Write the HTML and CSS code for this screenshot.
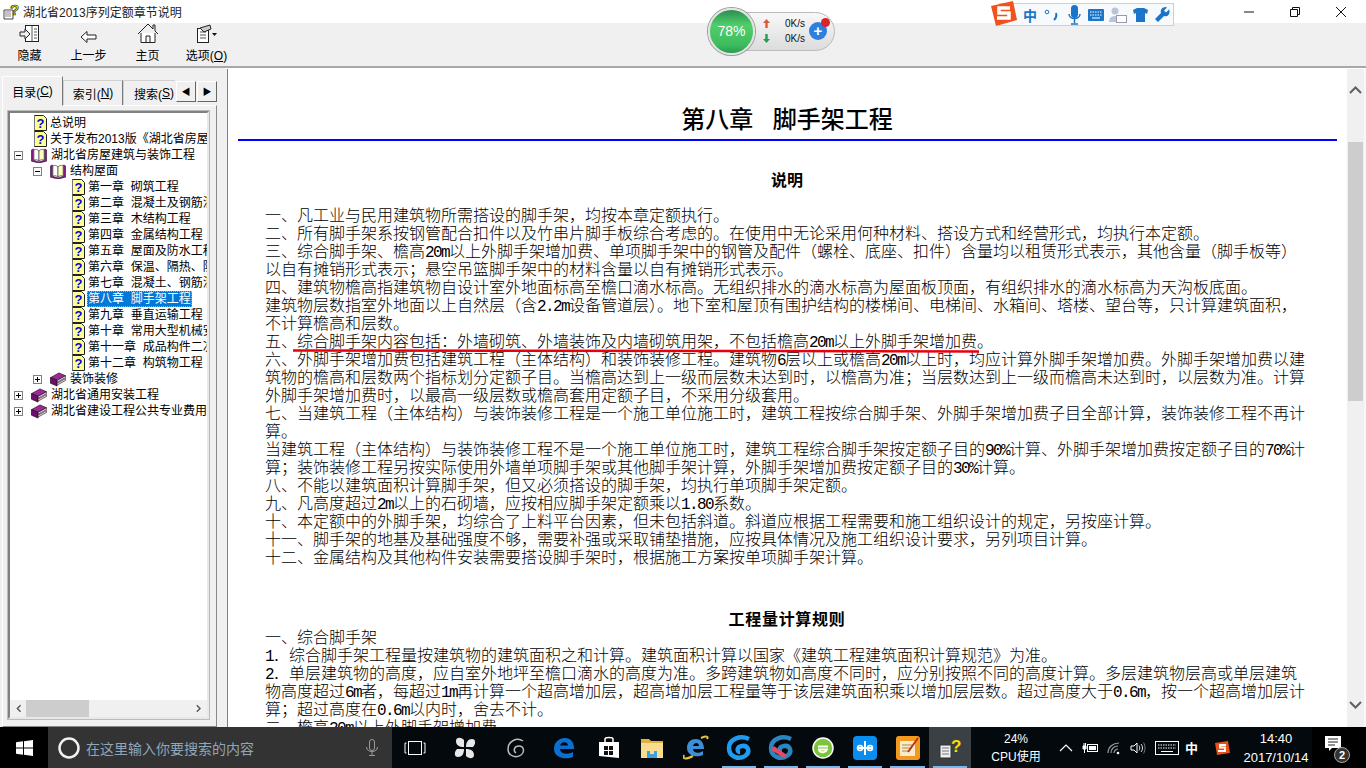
FILE: index.html
```html
<!DOCTYPE html>
<html lang="zh">
<head>
<meta charset="utf-8">
<title>湖北省2013序列定额章节说明</title>
<link rel="stylesheet" href="styles.css">
</head>
<body>
<svg class="defs" width="0" height="0">
  <defs>
    <symbol id="doc" viewBox="0 0 14 16">
      <path d="M1.500 .5h9l3 3v12h-12z" fill="#ffff98" stroke="#222"/>
      <path d="M1.500 1v14" stroke="#777"/>
      <text x="7.400" y="12.500" class="q">?</text>
    </symbol>
    <symbol id="open" viewBox="0 0 18 16">
      <path d="M1 2l2-1v12l6 2 6-2V1l2 1v12l-8 2-8-2z" fill="#8a1a8a" stroke="#401040" stroke-width=".7"/>
      <path d="M3.500 2c2-1 4-.5 5.500 1v11c-1.500-1.500-3.500-2-5.500-1z" fill="#fff" stroke="#333" stroke-width=".7"/>
      <path d="M9 3c1.500-1.500 3.500-2 5.500-1v11c-2-1-4-.5-5.500 1z" fill="#ffffc0" stroke="#333" stroke-width=".7"/>
    </symbol>
    <symbol id="book" viewBox="0 0 18 16">
      <path d="M1 6l9-5 7 3-9 5z" fill="#9a2a9a" stroke="#201" stroke-width=".7"/>
      <path d="M1 6l7 3v6l-7-3z" fill="#6d0f6d" stroke="#201" stroke-width=".7"/>
      <path d="M8 9l9-5v2l-9 5zM8 12l9-5v2l-9 5z" fill="#ddd" stroke="#201" stroke-width=".6"/>
    </symbol>
    <symbol id="plus" viewBox="0 0 9 9">
      <rect x=".5" y=".5" width="8" height="8" fill="#fff" stroke="#808080"/>
      <path d="M2 4.500h5M4.500 2v5" stroke="#000"/>
    </symbol>
    <symbol id="minus" viewBox="0 0 9 9">
      <rect x=".5" y=".5" width="8" height="8" fill="#fff" stroke="#808080"/>
      <path d="M2 4.500h5" stroke="#000"/>
    </symbol>
  </defs>
</svg>

<header class="titlebar">
  <span class="app-icon">
    <svg width="18" height="18" viewBox="0 0 18 18"><path d="M2 7h9v9H2z" fill="#fff" stroke="#444"/><path d="M3 9h6M3 11h6M3 13h6" stroke="#888"/><text x="8" y="12" class="q-big">?</text></svg>
  </span>
  <span class="title-text">湖北省2013序列定额章节说明</span>
  <span class="win-buttons">
    <svg width="46" height="20" viewBox="0 0 46 20"><path d="M18 10h10" stroke="#111"/></svg>
    <svg width="46" height="20" viewBox="0 0 46 20"><path d="M18.500 7.500h7v7h-7zM20.500 7.500v-2h7v7h-2" fill="none" stroke="#111"/></svg>
    <svg width="46" height="20" viewBox="0 0 46 20"><path d="M18 5l10 10M28 5L18 15" stroke="#111"/></svg>
  </span>
</header>

<nav class="toolbar">
  <div class="tool">
    <svg width="22" height="20" viewBox="0 0 22 20"><rect x="6.500" y="1.500" width="13" height="16" fill="#fff" stroke="#222"/><path d="M13 2v15M15 5h3M15 8h3M15 11h3M15 14h3" stroke="#555"/><path d="M1 8h5V5l5 5-5 5v-3H1z" fill="#eee" stroke="#222"/></svg>
    <span>隐藏</span>
  </div>
  <div class="tool">
    <svg width="17" height="14" viewBox="0 0 17 14"><path d="M1 7l6-5.500V5h9v4H7v3.500z" fill="#fff" stroke="#222"/></svg>
    <span>上一步</span>
  </div>
  <div class="tool">
    <svg width="22" height="21" viewBox="0 0 22 21"><path d="M1 11L11 1l5 5V2h2v6l3 3" fill="none" stroke="#222"/><path d="M4 10v9.500h14V10" fill="#fff" stroke="#222"/><path d="M9 19v-6h4v6" fill="#f6f6f6" stroke="#222"/></svg>
    <span>主页</span>
  </div>
  <div class="tool">
    <svg width="22" height="20" viewBox="0 0 22 20"><rect x="1.500" y="4.500" width="11" height="14" fill="#fff" stroke="#222"/><path d="M4 8h6M4 11h6M4 14h6" stroke="#555"/><path d="M4 4l10-3 1 4-7 3z" fill="#ccc" stroke="#222"/><path d="M16 9h5l-2.500 3z" fill="#111"/></svg>
    <span>选项(<u>O</u>)</span>
  </div>
</nav>

<main class="workspace">
  <aside class="nav-pane">
    <div class="tabs">
      <span class="tab tab-active">目录(<u>C</u>)</span>
      <span class="tab">索引(<u>N</u>)</span>
      <span class="tab tab-clip">搜索(<u>S</u>)</span>
      <span class="tab-arrow">◀</span>
      <span class="tab-arrow">▶</span>
    </div>
    <div class="tab-body">
      <div class="tree-frame">
        <ul class="tree">
          <li class="lv1"><i class="exp"></i><svg class="ic"><use href="#doc"/></svg><span>总说明</span></li>
          <li class="lv1"><i class="exp"></i><svg class="ic"><use href="#doc"/></svg><span>关于发布2013版《湖北省房屋建筑</span></li>
          <li class="lv1"><svg class="exp"><use href="#minus"/></svg><svg class="ic ic-book"><use href="#open"/></svg><span>湖北省房屋建筑与装饰工程</span></li>
          <li class="lv2"><svg class="exp"><use href="#minus"/></svg><svg class="ic ic-book"><use href="#open"/></svg><span>结构屋面</span></li>
          <li class="lv3"><svg class="ic"><use href="#doc"/></svg><span>第一章&nbsp;&nbsp;砌筑工程</span></li>
          <li class="lv3"><svg class="ic"><use href="#doc"/></svg><span>第二章&nbsp;&nbsp;混凝土及钢筋混凝土</span></li>
          <li class="lv3"><svg class="ic"><use href="#doc"/></svg><span>第三章&nbsp;&nbsp;木结构工程</span></li>
          <li class="lv3"><svg class="ic"><use href="#doc"/></svg><span>第四章&nbsp;&nbsp;金属结构工程</span></li>
          <li class="lv3"><svg class="ic"><use href="#doc"/></svg><span>第五章&nbsp;&nbsp;屋面及防水工程</span></li>
          <li class="lv3"><svg class="ic"><use href="#doc"/></svg><span>第六章&nbsp;&nbsp;保温、隔热、防腐</span></li>
          <li class="lv3"><svg class="ic"><use href="#doc"/></svg><span>第七章&nbsp;&nbsp;混凝土、钢筋混凝土</span></li>
          <li class="lv3"><svg class="ic"><use href="#doc"/></svg><span class="selected">第八章&nbsp;&nbsp;脚手架工程</span></li>
          <li class="lv3"><svg class="ic"><use href="#doc"/></svg><span>第九章&nbsp;&nbsp;垂直运输工程</span></li>
          <li class="lv3"><svg class="ic"><use href="#doc"/></svg><span>第十章&nbsp;&nbsp;常用大型机械安拆</span></li>
          <li class="lv3"><svg class="ic"><use href="#doc"/></svg><span>第十一章&nbsp;&nbsp;成品构件二次运输</span></li>
          <li class="lv3"><svg class="ic"><use href="#doc"/></svg><span>第十二章&nbsp;&nbsp;构筑物工程</span></li>
          <li class="lv2"><svg class="exp"><use href="#plus"/></svg><svg class="ic ic-book"><use href="#book"/></svg><span>装饰装修</span></li>
          <li class="lv1"><svg class="exp"><use href="#plus"/></svg><svg class="ic ic-book"><use href="#book"/></svg><span>湖北省通用安装工程</span></li>
          <li class="lv1"><svg class="exp"><use href="#plus"/></svg><svg class="ic ic-book"><use href="#book"/></svg><span>湖北省建设工程公共专业费用定额</span></li>
        </ul>
        <div class="hscroll">
          <svg width="9" height="9" viewBox="0 0 9 9"><path d="M6 1L2.500 4.500 6 8" fill="none" stroke="#555" stroke-width="1.500"/></svg>
          <span class="hthumb"></span>
          <svg width="9" height="9" viewBox="0 0 9 9"><path d="M3 1l3.500 3.500L3 8" fill="none" stroke="#555" stroke-width="1.500"/></svg>
        </div>
      </div>
    </div>
  </aside>

  <section class="doc-pane">
    <article class="doc">
      <h1>第八章&nbsp;&nbsp;脚手架工程</h1>
      <hr class="rule">
      <h2 class="h-shuoming">说明</h2>
      <div class="lines">
        <p>一、凡工业与民用建筑物所需搭设的脚手架，均按本章定额执行。</p>
        <p>二、所有脚手架系按钢管配合扣件以及竹串片脚手板综合考虑的。在使用中无论采用何种材料、搭设方式和经营形式，均执行本定额。</p>
        <p>三、综合脚手架、檐高<span class="n">20m</span>以上外脚手架增加费、单项脚手架中的钢管及配件（螺栓、底座、扣件）含量均以租赁形式表示，其他含量（脚手板等）</p>
        <p>以自有摊销形式表示；悬空吊篮脚手架中的材料含量以自有摊销形式表示。</p>
        <p>四、建筑物檐高指建筑物自设计室外地面标高至檐口滴水标高。无组织排水的滴水标高为屋面板顶面，有组织排水的滴水标高为天沟板底面。</p>
        <p>建筑物层数指室外地面以上自然层（含<span class="n">2.2m</span>设备管道层）。地下室和屋顶有围护结构的楼梯间、电梯间、水箱间、塔楼、望台等，只计算建筑面积，</p>
        <p>不计算檐高和层数。</p>
        <p>五、综合脚手架内容包括：外墙砌筑、外墙装饰及内墙砌筑用架，不包括檐高<span class="n">20m</span>以上外脚手架增加费。</p>
        <p>六、外脚手架增加费包括建筑工程（主体结构）和装饰装修工程。建筑物<span class="n">6</span>层以上或檐高<span class="n">20m</span>以上时，均应计算外脚手架增加费。外脚手架增加费以建</p>
        <p>筑物的檐高和层数两个指标划分定额子目。当檐高达到上一级而层数未达到时，以檐高为准；当层数达到上一级而檐高未达到时，以层数为准。计算</p>
        <p>外脚手架增加费时，以最高一级层数或檐高套用定额子目，不采用分级套用。</p>
        <p>七、当建筑工程（主体结构）与装饰装修工程是一个施工单位施工时，建筑工程按综合脚手架、外脚手架增加费子目全部计算，装饰装修工程不再计</p>
        <p>算。</p>
        <p>当建筑工程（主体结构）与装饰装修工程不是一个施工单位施工时，建筑工程综合脚手架按定额子目的<span class="n">90%</span>计算、外脚手架增加费按定额子目的<span class="n">70%</span>计</p>
        <p>算；装饰装修工程另按实际使用外墙单项脚手架或其他脚手架计算，外脚手架增加费按定额子目的<span class="n">30%</span>计算。</p>
        <p>八、不能以建筑面积计算脚手架，但又必须搭设的脚手架，均执行单项脚手架定额。</p>
        <p>九、凡高度超过<span class="n">2m</span>以上的石砌墙，应按相应脚手架定额乘以<span class="n">1.80</span>系数。</p>
        <p>十、本定额中的外脚手架，均综合了上料平台因素，但未包括斜道。斜道应根据工程需要和施工组织设计的规定，另按座计算。</p>
        <p>十一、脚手架的地基及基础强度不够，需要补强或采取铺垫措施，应按具体情况及施工组织设计要求，另列项目计算。</p>
        <p>十二、金属结构及其他构件安装需要搭设脚手架时，根据施工方案按单项脚手架计算。</p>
      </div>
      <h2 class="h-rules">工程量计算规则</h2>
      <div class="lines">
        <p>一、综合脚手架</p>
        <p><span class="n">1</span>．综合脚手架工程量按建筑物的建筑面积之和计算。建筑面积计算以国家《建筑工程建筑面积计算规范》为准。</p>
        <p><span class="n">2</span>．单层建筑物的高度，应自室外地坪至檐口滴水的高度为准。多跨建筑物如高度不同时，应分别按照不同的高度计算。多层建筑物层高或单层建筑</p>
        <p>物高度超过<span class="n">6m</span>者，每超过<span class="n">1m</span>再计算一个超高增加层，超高增加层工程量等于该层建筑面积乘以增加层层数。超过高度大于<span class="n">0.6m</span>，按一个超高增加层计</p>
        <p>算；超过高度在<span class="n">0.6m</span>以内时，舍去不计。</p>
        <p>二、檐高<span class="n">20m</span>以上外脚手架增加费</p>
      </div>
      <svg class="redline" width="700" height="6" viewBox="0 0 700 6"><path d="M0 1.500L440 2C550 2.500 650 3 686 2.500" fill="none" stroke="#e8000f" stroke-width="2.500"/></svg>
    </article>
    <div class="vscroll">
      <svg width="17" height="10" viewBox="0 0 17 10"><path d="M3 8l5.500-5.500L14 8" fill="none" stroke="#606060" stroke-width="2"/></svg>
      <span class="vthumb"></span>
      <svg class="vdown" width="17" height="10" viewBox="0 0 17 10"><path d="M3 2l5.500 5.500L14 2" fill="none" stroke="#606060" stroke-width="2"/></svg>
    </div>
  </section>
</main>

<footer class="taskbar">
  <span class="start">
    <svg width="17" height="16" viewBox="0 0 17 16"><path d="M0 2.300l7-1v6.200H0zM8 1.200L17 0v7.500H8zM0 8.500h7v6.200l-7-1zM8 8.500h9V16l-9-1.200z" fill="#fff"/></svg>
  </span>
  <div class="search">
    <svg width="24" height="24" viewBox="0 0 24 24"><circle cx="12" cy="12" r="9.500" fill="none" stroke="#f0f0f0" stroke-width="2.500"/></svg>
    <span class="search-text">在这里输入你要搜索的内容</span>
    <svg class="mic" width="14" height="18" viewBox="0 0 14 18"><rect x="4.500" y=".5" width="5" height="11" rx="2.500" fill="none" stroke="#9a9a9a"/><path d="M1.500 8c0 6 11 6 11 0M7 13v3M4 16.500h6" fill="none" stroke="#9a9a9a"/></svg>
  </div>
  <div class="task-icons">
    <span class="ti w46"><svg width="22" height="16" viewBox="0 0 22 16"><rect x="4.500" y="1.500" width="13" height="13" fill="none" stroke="#fff"/><path d="M2.500 3H1v10h1.500M19.500 3H21v10h-1.500" fill="none" stroke="#fff"/></svg></span>
    <span class="ti w54"><svg width="24" height="24" viewBox="0 0 24 24"><g fill="#e8e8e8"><path d="M11 11C6 11 3 9 3 5s5-4 8-1zM13 11c0-5 2-8 6-8s4 5 1 8zM13 13c5 0 8 2 8 6s-5 4-8 1zM11 13c0 5-2 8-6 8s-4-5-1-8z"/></g></svg></span>
    <span class="ti w48"><svg width="22" height="22" viewBox="0 0 22 22"><path d="M18 4C12 0 3 4 3 12s9 9 13 6 3-9-2-9-6 5-3 7" fill="none" stroke="#bbb" stroke-width="1.500"/></svg></span>
    <span class="ti w48"><svg width="22" height="22" viewBox="0 0 22 22"><path d="M1 12C1 5 6 1 12 1c6 0 9 4 9 11H7c0 5 8 6 13 3v5c-7 3-19 1-19-8zM7 8.500h8C15 4 8 4 7 8.500z" fill="#0b6fd1"/></svg></span>
    <span class="ti w42"><svg width="22" height="24" viewBox="0 0 22 24"><path d="M1 6h20v16L1 20z" fill="#fff"/><path d="M7 6V3c0-2 8-2 8 0v3" fill="none" stroke="#fff" stroke-width="1.500"/><path d="M6 10h4v4H6zM11 10h4v4h-4zM6 15h4v4H6zM11 15h4v4h-4z" fill="#111"/></svg></span>
    <span class="ti w43"><svg width="22" height="20" viewBox="0 0 22 20"><path d="M0 1h8l2 2h12v3H0z" fill="#e0b040"/><rect y="5" width="22" height="15" fill="#f6dd8f"/><path d="M6 13h10v7H6z" fill="#3fa2e0"/><path d="M9 13h4v3H9z" fill="#f6dd8f"/></svg></span>
    <span class="ti w45"><svg width="26" height="26" viewBox="0 0 26 26"><path d="M4 13c0-6 4-9 9-9s8 4 8 10H10c0 4 6 5 10 2v4c-6 3-16 1-16-7zM10 11h6c0-4-5-4-6 0z" fill="#3d8fd6"/><path d="M1 20C-1 25 4 24 10 21M24 4c2-3-1-3-6-1" fill="none" stroke="#e8c23a" stroke-width="2"/></svg></span>
    <span class="ti w42 run"><svg width="26" height="26" viewBox="0 0 26 26"><path d="M23 4C14 0 3 4 3 13s10 12 16 8 3-11-3-10-5 6-2 6" fill="none" stroke="#1f9bf0" stroke-width="4.500"/></svg></span>
    <span class="ti w42 run"><svg width="26" height="26" viewBox="0 0 26 26"><path d="M23 4C14 0 3 4 3 13s10 12 16 8 3-11-3-10-5 6-2 6" fill="none" stroke="#2a86c0" stroke-width="4.500"/><path d="M3 15l13 8 3-3-13-9z" fill="#e24a68"/></svg></span>
    <span class="ti w42 run"><svg width="24" height="24" viewBox="0 0 24 24"><circle cx="12" cy="12" r="10" fill="#7cc43a" stroke="#fff" stroke-width="1.500"/><path d="M7 10.500h10M7 13.500h9c-1 3-6 4-8 1" fill="none" stroke="#fff" stroke-width="2"/></svg></span>
    <span class="ti w42 run"><svg width="24" height="24" viewBox="0 0 24 24"><rect width="24" height="24" rx="4" fill="#0a8df0"/><path d="M12 5v14M5 12h14" stroke="#fff" stroke-width="2"/><circle cx="7" cy="12" r="2.500" fill="none" stroke="#fff" stroke-width="1.500"/><circle cx="17" cy="12" r="2.500" fill="none" stroke="#fff" stroke-width="1.500"/></svg></span>
    <span class="ti w43 run"><svg width="24" height="24" viewBox="0 0 24 24"><rect width="24" height="24" rx="3" fill="#f39a1e"/><rect x="4" y="5" width="15" height="15" fill="#f7eccb"/><path d="M6 9h10M6 12h10M6 15h7" stroke="#b3853e"/><path d="M22 2L12 16" stroke="#c0301c" stroke-width="2"/></svg></span>
    <span class="ti w42 run active"><svg width="26" height="24" viewBox="0 0 26 24"><path d="M3 9h11v13H3z" fill="#eee" stroke="#333"/><path d="M5 12h7M5 15h7M5 18h7" stroke="#777"/><text x="14" y="16" class="q-task">?</text></svg></span>
  </div>
  <div class="cpu"><span>24%</span><span>CPU使用</span></div>
  <div class="tray">
    <svg width="14" height="8" viewBox="0 0 14 8"><path d="M1 7l6-6 6 6" fill="none" stroke="#fff" stroke-width="1.200"/></svg>
    <svg width="16" height="12" viewBox="0 0 16 12"><rect x="5.500" y="2.500" width="10" height="7" fill="none" stroke="#fff"/><rect x="7" y="4" width="7" height="4" fill="#fff"/><path d="M1 4h3v3H1zM2 1v3M3.500 1v3M2.500 7v4" stroke="#fff" fill="#fff"/></svg>
    <svg width="14" height="14" viewBox="0 0 14 14"><path d="M1 12c0-6 5-10 11-10M4 12c0-4 3-7 7-7M7 12c0-2 2-4 4-4" fill="none" stroke="#999" stroke-width="1.200"/><circle cx="11" cy="12" r="1.300" fill="#fff"/></svg>
    <svg width="16" height="14" viewBox="0 0 16 14"><path d="M1 5h3l3-3v10L4 9H1z" fill="none" stroke="#fff"/><path d="M9 4.500c1 1.500 1 3.500 0 5M11 3c2 2.500 2 5.500 0 8" fill="none" stroke="#ddd"/><path d="M13.500 1.500c2 3 2 8 0 11" fill="none" stroke="#777"/></svg>
    <svg width="24" height="14" viewBox="0 0 24 14"><rect x=".5" y=".5" width="23" height="13" fill="none" stroke="#fff"/><path d="M3 4h18M3 7h18" stroke="#fff" stroke-dasharray="1.500 1"/><path d="M6 10.500h12" stroke="#fff"/></svg>
    <span class="ime">中</span>
    <svg class="tray-s" width="16" height="16" viewBox="0 0 16 16"><path d="M1 3l13-2 2 12-13 2z" fill="#e8501a"/><path d="M12 5H6v2.500h5V11H4" fill="none" stroke="#fff" stroke-width="1.800"/></svg>
  </div>
  <div class="clock"><span>14:40</span><span>2017/10/14</span></div>
  <div class="notify">
    <svg class="notify-ic" width="16" height="16" viewBox="0 0 16 16"><path d="M0 0h16v12H7l-3 3v-3H0z" fill="#fff"/><path d="M3 3h10M3 6h10M3 9h7" stroke="#222"/></svg>
    <span class="notify-badge">2</span>
  </div>
</footer>

<div class="speed-widget">
  <div class="speed-ball">78%</div>
  <div class="speed-rates">
    <span class="arrows">
      <svg width="7" height="9" viewBox="0 0 7 9"><path d="M3.500 0L7 4H4.700v5H2.300V4H0z" fill="#e0583a"/></svg>
      <svg width="7" height="9" viewBox="0 0 7 9"><path d="M3.500 9L7 5H4.700V0H2.300v5H0z" fill="#2a9a50"/></svg>
    </span>
    <span class="rates"><span>0K/s</span><span>0K/s</span></span>
    <span class="speed-plus">+<i class="speed-dot"></i></span>
  </div>
</div>

<div class="ime-bar">
  <svg class="ime-logo" width="28" height="27" viewBox="0 0 28 27"><path d="M1 6l22-5 4 19L6 26z" fill="#f0521c"/><path d="M20 8H9v5h10v5H7" fill="none" stroke="#fff" stroke-width="3.500"/></svg>
  <span class="bi ime-zh">中</span>
  <span class="bi"><svg width="16" height="14" viewBox="0 0 16 14"><circle cx="3" cy="4" r="1.800" fill="none" stroke="#1a75c8"/><path d="M12 5c1 3 0 5-2 7" fill="none" stroke="#1a75c8" stroke-width="2"/></svg></span>
  <span class="bi"><svg width="13" height="20" viewBox="0 0 13 20"><rect x="3" y="0" width="7" height="13" rx="3.500" fill="#1a75c8"/><path d="M1 9c0 6 11 6 11 0M6.500 14v4M3 19h7" fill="none" stroke="#1a75c8" stroke-width="1.500"/></svg></span>
  <span class="bi"><svg width="16" height="12" viewBox="0 0 16 12"><rect width="16" height="12" rx="1" fill="#1a75c8"/><path d="M2 3h12M2 6h12" stroke="#fff" stroke-dasharray="1.500 1"/><path d="M4 9h8" stroke="#fff"/></svg></span>
  <span class="bi"><svg width="18" height="16" viewBox="0 0 18 16"><circle cx="6" cy="4" r="3.500" fill="#b8c6d6"/><path d="M0 15c0-8 11-8 11 0z" fill="#b8c6d6"/><rect x="7.500" y="8.500" width="10" height="7" fill="#fff" stroke="#99a"/></svg></span>
  <span class="bi"><svg width="15" height="14" viewBox="0 0 15 14"><path d="M0 2l4-2h7l4 2-1 4-2-1v9H3V5L1 6z" fill="#1a75c8"/></svg></span>
  <span class="bi"><svg width="15" height="15" viewBox="0 0 15 15"><path d="M0 12l6-6C5 3 7 0 11 0l1 .5-3 3 2 2 3-3 .5 1C15 8 12 10 9 9l-6 6z" fill="#1a75c8"/></svg></span>
</div>
</body>
</html>
```
FILE: styles.css
```css
* { box-sizing: border-box; }
html, body { margin: 0; height: 768px; overflow: hidden; }
body {
  width: 1366px;
  display: flex;
  flex-direction: column;
  background: #f0f0f0;
  font-family: "Liberation Mono", "Noto Sans CJK SC", monospace;
  color: #000;
  position: relative;
}
.defs { position: absolute; }
.q { font: bold 13px "Liberation Sans", sans-serif; fill: #0000e0; text-anchor: middle; }
.q-big { font: bold 15px "Liberation Sans", sans-serif; fill: #f6d800; stroke: #222; stroke-width: .6; }
.q-task { font: bold 17px "Liberation Sans", sans-serif; fill: #f6e000; }

/* Window chrome */
.titlebar {
  height: 23px;
  flex: none;
  background: #fff;
  display: flex;
  align-items: center;
  padding-left: 2px;
  font: 12px "Liberation Sans", "Noto Sans CJK SC", sans-serif;
}
.app-icon { width: 20px; height: 18px; margin-right: 1px; }
.title-text { font-size: 12px; color: #222; }
.win-buttons { margin-left: auto; margin-right: 2px; display: flex; }
.toolbar {
  height: 45px;
  flex: none;
  display: flex;
  align-items: flex-start;
  background: #f0f0f0;
  border-bottom: 2px solid #a8a8a8;
  font: 12px "Liberation Sans", "Noto Sans CJK SC", sans-serif;
}
.tool { display: flex; flex-direction: column; align-items: center; justify-content: flex-end; height: 43px; width: 59px; padding-bottom: 3px; gap: 2px; }
.tool svg { flex: none; }

/* Panes */
.workspace { flex: 1; display: flex; min-height: 0; }
.nav-pane {
  width: 224px;
  flex: none;
  display: flex;
  flex-direction: column;
  padding: 8px 7px 0 2px;
  background: #f0f0f0;
}
.tabs { height: 29px; flex: none; display: flex; align-items: flex-end; font: 12px "Liberation Sans", "Noto Sans CJK SC", sans-serif; position: relative; z-index: 1; }
.tab {
  height: 25px;
  width: 60px;
  flex: none;
  display: flex;
  align-items: center;
  justify-content: center;
  background: #f0f0f0;
  border: 1px solid #d0d0d0;
  border-bottom: 0;
  border-right-color: #777;
  white-space: nowrap;
}
.tab-active { height: 30px; width: 61px; border-bottom: 1px solid #f0f0f0; margin-bottom: -1px; border-top-color: #fff; border-left-color: #fff; }
.tab-clip { width: 52px; overflow: hidden; justify-content: flex-start; padding-left: 10px; border-right: 0; }
.tab-arrow {
  width: 20px;
  height: 21px;
  flex: none;
  font-size: 9px;
  display: flex;
  align-items: center;
  justify-content: center;
  background: #f0f0f0;
  border: 1px solid;
  border-color: #fff #666 #666 #fff;
  margin-bottom: 3px;
  margin-left: 1px;
}
.tab-body { flex: 1; min-height: 0; border: 1px solid #fff; border-right-color: #888; border-bottom-color: #888; padding: 5px 7px 7px 5px; }
.tree-frame { height: 100%; display: flex; flex-direction: column; background: #fff; border: 2px solid; border-color: #808080 #e8e8e8 #e8e8e8 #808080; outline: 1px solid #bbb; }
.tree { flex: 1; min-height: 0; list-style: none; margin: 0; padding: 2px 0 0; overflow: hidden; font: 12px/16px "Liberation Sans", "Noto Sans CJK SC", sans-serif; }
.tree li { height: 16px; display: flex; align-items: center; white-space: nowrap; overflow: hidden; }
.lv1 { padding-left: 4px; }
.lv2 { padding-left: 23px; }
.lv3 { padding-left: 61px; }
.exp { width: 9px; height: 9px; flex: none; margin-right: 10px; display: block; }
.ic { width: 14px; height: 16px; flex: none; margin-right: 2px; }
.ic-book { width: 18px; height: 15px; margin-left: -3px; margin-right: 2px; }
.tree span { padding: 0 1px; }
.selected { background: #0078d7; color: #fff; outline: 1px dotted #e8a040; outline-offset: -1px; }
.hscroll { height: 17px; flex: none; display: flex; align-items: center; background: #f0f0f0; padding: 0 5px; justify-content: space-between; }
.hthumb { width: 67px; height: 17px; background: #cdcdcd; margin-right: 105px; margin-left: 3px; }
.doc-pane { flex: 1; display: flex; min-width: 0; background: #fff; border-left: 3px solid #f0f0f0; border-top: 1px solid #fff; box-shadow: inset 1px 0 0 #808080; }
.doc { flex: 1; min-width: 0; overflow: hidden; position: relative; padding: 0 0 0 38px; font-size: 16px; line-height: 18px; }
.doc h1 { margin: 0 0 0 -28px; padding-top: 36px; width: 1100px; font: 500 24px/30px "Liberation Sans", "Noto Sans CJK SC", sans-serif; word-spacing: 3px; text-align: center; }
.rule { height: 2px; border: 0; background: #0000ff; margin: 4px 0 0 -27px; width: 1099px; }
.doc h2 { font: bold 16px/20px "Liberation Sans", "Noto Sans CJK SC", sans-serif; text-align: center; margin: 0 0 0 -38px; width: 1120px; }
.h-shuoming { padding-top: 30px; padding-bottom: 17px; }
.h-rules { padding-top: 42px; padding-bottom: 0; letter-spacing: .7px; }
.lines p { margin: 0; white-space: nowrap; height: 18px; font: 300 16px/18px "Liberation Mono", "Noto Sans CJK SC", monospace; }
.n { letter-spacing: -1.6px; }
.redline { position: absolute; left: 66px; top: 280px; }
.vscroll { width: 19px; flex: none; background: #f0f0f0; border-right: 2px solid #f8f8f8; display: flex; flex-direction: column; align-items: center; padding: 16px 0 17px; }
.vthumb { width: 15px; height: 259px; background: #cdcdcd; margin-top: 47px; }
.vdown { margin-top: auto; }

/* Taskbar */
.taskbar { height: 41px; flex: none; display: flex; align-items: center; background: #03090d; color: #fff; font: 12px "Liberation Sans", "Noto Sans CJK SC", sans-serif; }
.start { width: 48px; height: 100%; background: #000; display: flex; align-items: center; justify-content: center; }
.search { width: 344px; height: 100%; background: #333; display: flex; align-items: center; padding-left: 9px; gap: 5px; }
.search-text { color: #8fa6b8; font-size: 14px; width: 274px; flex: none; }
.mic { flex: none; }
.task-icons { display: flex; height: 100%; }
.ti { height: 100%; display: flex; align-items: center; justify-content: center; position: relative; flex: none; }
.w42 { width: 42px; }
.w43 { width: 43px; }
.w45 { width: 45px; }
.w46 { width: 46px; }
.w48 { width: 48px; }
.w54 { width: 54px; }
.ti.run::after { content: ""; position: absolute; left: 4px; right: 4px; bottom: 0; height: 2px; background: #76b9ed; }
.ti.active { background: #3a4043; }
.cpu { width: 90px; display: flex; flex-direction: column; align-items: center; line-height: 18px; font-size: 12px; }
.tray { display: flex; align-items: center; gap: 9px; margin-left: -2px; width: 174px; flex: none; }
.ime { font-size: 13px; font-weight: 700; width: 16px; margin-left: -3px; }
.tray-s { margin-left: 4px; }
.clock { width: 72px; margin-left: 7px; display: flex; flex-direction: column; align-items: center; line-height: 19px; font-size: 13px; flex: none; }
.notify { width: 54px; display: flex; align-items: center; justify-content: center; position: relative; height: 100%; padding-right: 12px; background: #000; }
.notify-ic { margin-top: -8px; }
.notify-badge { position: absolute; left: 22px; top: 20px; width: 16px; height: 16px; border-radius: 50%; background: #333; border: 1px solid #aaa; font-size: 11px; font-weight: 700; display: flex; align-items: center; justify-content: center; }

/* Floating widgets */
.speed-widget { position: absolute; left: 708px; top: 7px; display: flex; align-items: center; height: 48px; }
.speed-ball { width: 47px; height: 47px; border-radius: 50%; background: linear-gradient(#2b8f4f, #4fce6a 35%, #3fbd5e 80%, #2a9c50); border: 2px solid #e4e4e4; box-shadow: 0 0 0 1px #999; color: #fff; font: 14px/43px "Liberation Sans", sans-serif; text-align: center; position: relative; z-index: 1; }
.speed-rates { width: 100px; height: 39px; margin-left: -20px; padding-left: 26px; border: 1px solid #bbb; border-radius: 0 20px 20px 0; background: linear-gradient(#f8f8f8, #dcdcdc); display: flex; align-items: center; }
.arrows { display: flex; flex-direction: column; gap: 6px; width: 22px; padding-left: 1px; }
.rates { width: 21px; display: flex; flex-direction: column; align-items: flex-end; font: 10px/15px "Liberation Sans", sans-serif; color: #111; }
.speed-plus { width: 18px; height: 18px; margin-left: 4px; border-radius: 50%; background: #2f7fe0; color: #fff; font: bold 15px/18px "Liberation Sans", sans-serif; text-align: center; position: relative; }
.speed-dot { position: absolute; right: -3px; top: -4px; width: 9px; height: 9px; border-radius: 50%; background: #d8252c; }
.ime-bar { position: absolute; left: 999px; top: 3px; width: 175px; height: 23px; padding-left: 19px; background: #f7fafd; border: 1px solid #c5d2de; display: flex; align-items: center; }
.ime-logo { position: absolute; left: -10px; top: -4px; }
.bi { width: 22px; flex: none; display: flex; align-items: center; justify-content: center; }
.ime-zh { color: #1a75c8; font: bold 14px "Noto Sans CJK SC", sans-serif; }
```
